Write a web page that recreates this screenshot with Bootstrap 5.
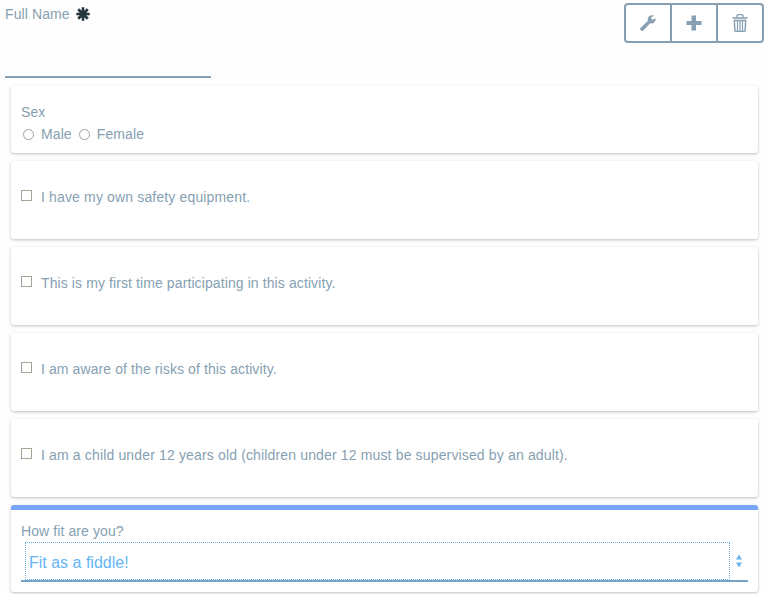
<!DOCTYPE html>
<html lang="en">
<head>
<meta charset="utf-8">
<meta name="viewport" content="width=device-width, initial-scale=1">
<title>Activity registration</title>
<link href="https://cdn.jsdelivr.net/npm/bootstrap@5.3.0/dist/css/bootstrap.min.css" rel="stylesheet">
<style>
body{font-family:"Liberation Sans",Arial,sans-serif;font-size:14px;line-height:20px;letter-spacing:.1px;color:#869fb2;background:#fefefe;height:594px;overflow:hidden}
.name-row{height:86px;padding:3px 7px 0 5px}
.name-label{height:22px;line-height:22px}
.required-mark{margin-left:6px}
.name-input{width:206px;height:53px;border:0;border-bottom:2px solid #869fb2;background:transparent;border-radius:0;padding:0}
.tools{height:40px}
.tools .btn{width:48px;padding:0;border:2px solid #869fb2;border-radius:4px;color:#869fb2;background:#fff}
.tools .btn:not(:first-child){margin-left:-2px!important}
.tools svg{display:block;margin:auto}
.fields{padding:0 13px 0 11px;gap:8px}
.field-card{border:0;border-radius:3px;background:#fff;box-shadow:0 1px 3px rgba(0,0,0,.25);padding:0 10px}
.sex-card{height:67px;padding-top:16px}
.sex-options{margin-top:2px}
.sex-options label{padding-left:7px;padding-right:5px}
.check-card{height:78px;padding-top:26px}
.check-card span{padding-left:9px}
.wide-text{letter-spacing:.15px}
.fit-card{height:87px;border-top:5px solid #77a5fb;padding-top:11px}
.box,.dot{appearance:none;width:11px;height:11px;border:1px solid #a8a196;background:#fff;margin:0;flex:none}
.dot{border-radius:50%;margin-left:2px}
.box{margin-top:3px}
.fit-select{height:40px;margin-top:1px;border-bottom:2px solid #74a3ca;padding:0 6px 0 4px}
.fit-value{width:705px;height:38px;border:1px dotted #68aede;padding:1px 3px 0;font-size:16px;line-height:38px;letter-spacing:0;color:#64b5f6}
</style>
</head>
<body>
<div class="name-row d-flex justify-content-between align-items-start">
  <div>
    <label class="name-label d-flex align-items-center" for="fullName"><span>Full Name</span>
      <svg class="required-mark" width="14" height="14" viewBox="0 0 14 14" stroke="#263640" stroke-width="2.7" aria-hidden="true"><path d="M7 .3v13.4M.3 7h13.4M2.200 2.200l9.600 9.600M11.800 2.200l-9.600 9.600"/></svg>
    </label>
    <input class="name-input d-block" id="fullName" type="text">
  </div>
  <div class="btn-group tools" role="group" aria-label="Field actions">
    <button class="btn" type="button" aria-label="Settings"><svg width="16" height="16" viewBox="0 0 16 16" fill="currentColor"><path d="M15.700 3.200 12.900 4.700 11.200 3.700V2.400L13.900.7C11.500-.3 8.600.8 7.900 3.200c-.3.9-.2 1.800.1 2.500L.6 12.800c-.7.7-.7 1.500 0 2.200l.5.5c.7.6 1.500.6 2.200-.1L10.200 8.300c2.700.8 5.800-1.500 5.500-5.100z"/></svg></button>
    <button class="btn" type="button" aria-label="Add"><svg width="16" height="16" viewBox="0 0 16 16" fill="currentColor"><path d="M5.500.5h4.500V6H15.500v4H10v5.500H5.500V10H.5V6h5z"/></svg></button>
    <button class="btn" type="button" aria-label="Delete"><svg width="16" height="18" viewBox="0 0 16 18" fill="none" stroke="currentColor"><path d="M.5 4h15" stroke-width="1.600"/><path d="M5 3.500V1.500l1-1h4l1 1v2" stroke-width="1.300"/><path d="M2 6.500h12M2.300 6l.5 10.300q.1 1 1.100 1h8.200q1 0 1.100-1L13.700 6" stroke-width="1.500"/><path d="M5.500 7v9.500M8 7v9.500M10.500 7v9.500" stroke-width="1.200"/></svg></button>
  </div>
</div>
<div class="fields d-flex flex-column">
  <div class="card field-card sex-card">
    <div>Sex</div>
    <div class="sex-options d-flex align-items-center">
      <input class="dot" type="radio" name="sex" id="male"><label for="male">Male</label>
      <input class="dot" type="radio" name="sex" id="female"><label for="female">Female</label>
    </div>
  </div>
  <div class="card field-card check-card"><label class="d-flex"><input class="box" type="checkbox"><span class="wide-text">I have my own safety equipment.</span></label></div>
  <div class="card field-card check-card"><label class="d-flex"><input class="box" type="checkbox"><span>This is my first time participating in this activity.</span></label></div>
  <div class="card field-card check-card"><label class="d-flex"><input class="box" type="checkbox"><span>I am aware of the risks of this activity.</span></label></div>
  <div class="card field-card check-card"><label class="d-flex"><input class="box" type="checkbox"><span class="wide-text">I am a child under 12 years old (children under 12 must be supervised by an adult).</span></label></div>
  <div class="card field-card fit-card">
    <div>How fit are you?</div>
    <div class="fit-select d-flex justify-content-between align-items-center" role="combobox" aria-label="Fitness">
      <div class="fit-value">Fit as a fiddle!</div>
      <svg width="6" height="14" viewBox="0 0 6 14" fill="#64b5f6" aria-hidden="true"><path d="M0 5.500 3 .5l3 5zM0 8.500h6l-3 5z"/></svg>
    </div>
  </div>
</div>
<script src="https://cdn.jsdelivr.net/npm/bootstrap@5.3.0/dist/js/bootstrap.bundle.min.js"></script>
</body>
</html>
